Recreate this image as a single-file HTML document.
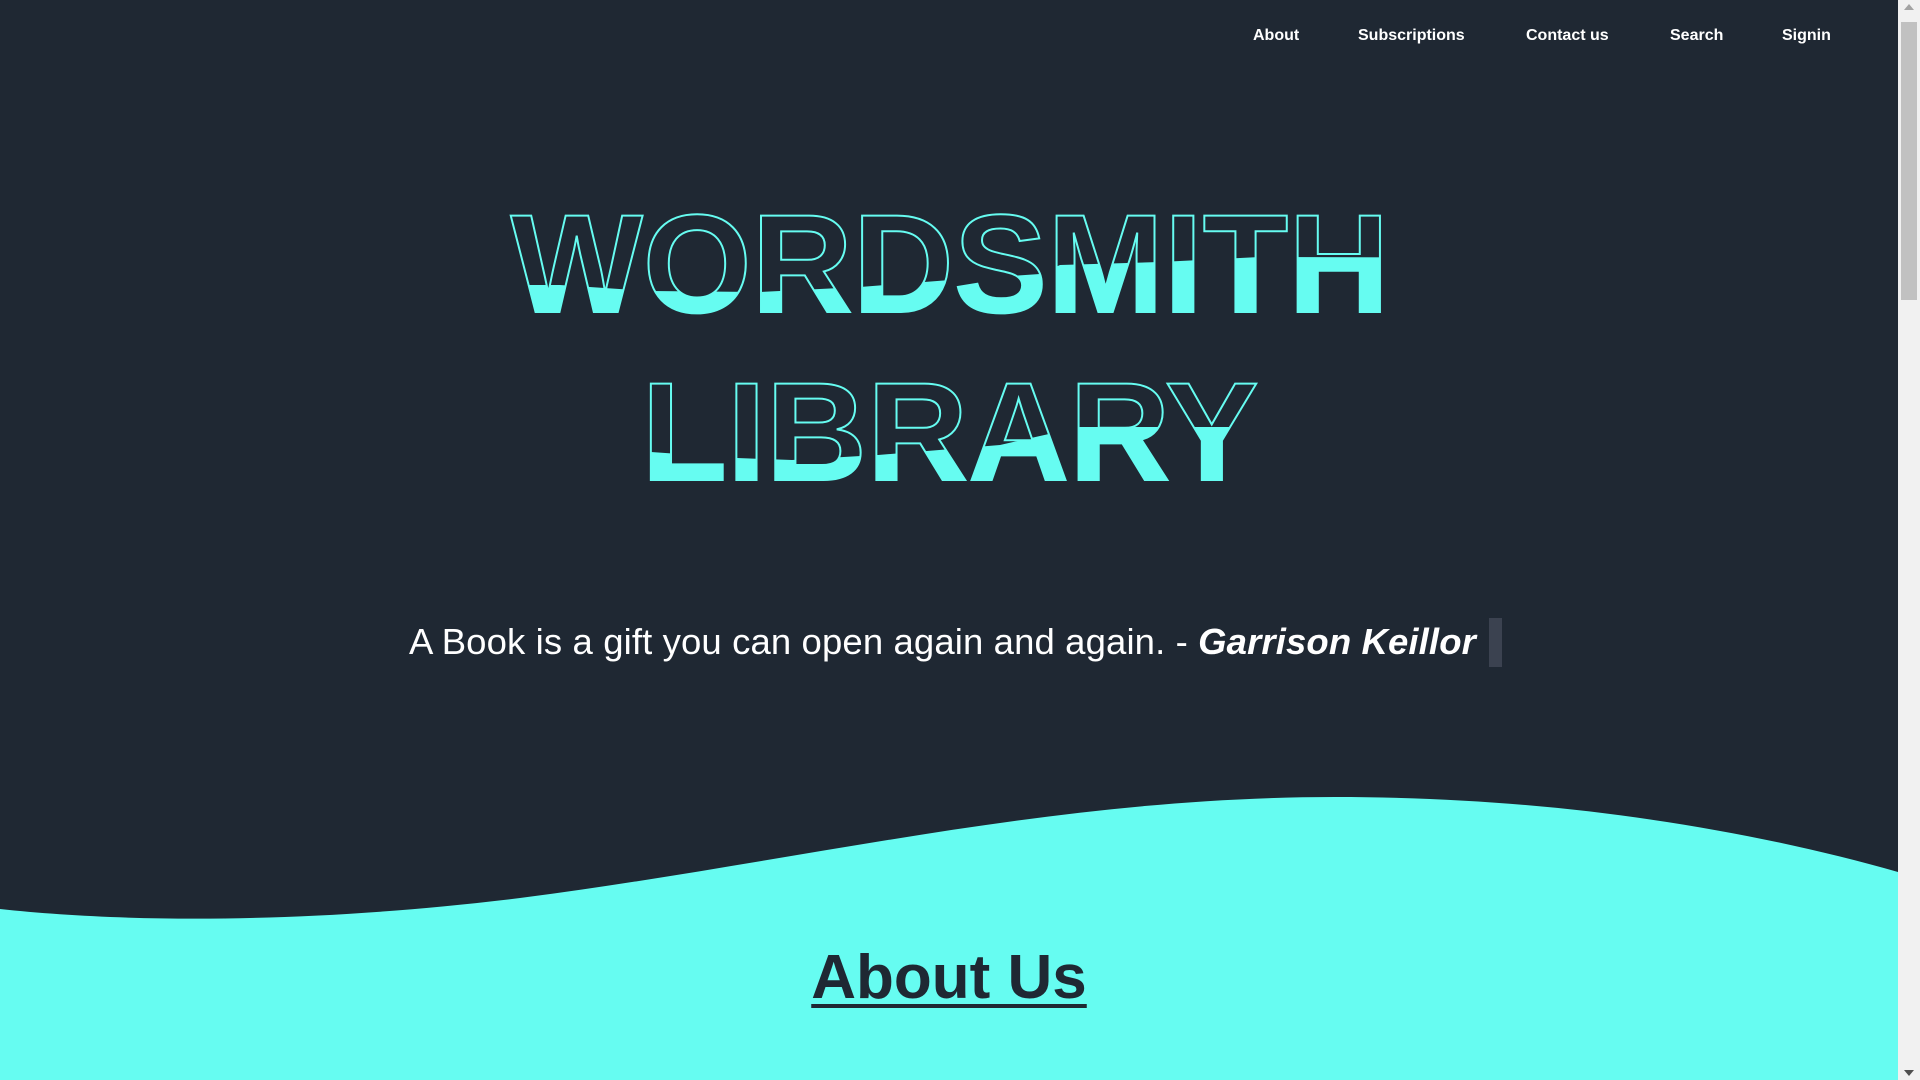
<!DOCTYPE html>
<html><head><meta charset="utf-8"><style>
html,body{margin:0;padding:0;width:1920px;height:1080px;overflow:hidden;background:#1f2833;font-family:"Liberation Sans",Arial,sans-serif}
.nav a{position:absolute;top:26px;color:#fff;font-weight:bold;font-size:16px;text-decoration:none;line-height:20px;white-space:nowrap}
.t{position:absolute;left:0;width:1900px;text-align:center;font-weight:bold;font-size:140px;line-height:168px;height:168px;white-space:nowrap;margin:0}
.o{color:transparent;-webkit-text-stroke:2px #66fcf1}
.f{color:#66fcf1}
.quote{position:absolute;left:409px;top:618px;font-size:36.5px;color:#fff;line-height:48px;white-space:nowrap;letter-spacing:0.12px}
.cur{position:absolute;left:1489px;top:618px;width:13px;height:49px;background:#3b4250}
.about{position:absolute;left:0;width:1898px;text-align:center;top:942px;font-size:62px;font-weight:bold;color:#1f2833;text-decoration:underline;text-decoration-thickness:4px;text-underline-offset:6px}
.sb{position:absolute;right:0;top:0;width:22px;height:1080px;background:#f1f1f1}
.th{position:absolute;left:3px;top:22px;width:16px;height:278px;background:#c1c1c1}
</style></head><body>
<div class="nav">
<a style="left:1253px">About</a>
<a style="left:1358px">Subscriptions</a>
<a style="left:1526px">Contact us</a>
<a style="left:1670px">Search</a>
<a style="left:1782px">Signin</a>
</div>
<div class="t o" style="top:180px">WORDSMITH</div>
<div class="t f" style="top:180px;clip-path:polygon(0 105px,560px 105px,650px 111px,760px 112px,860px 107px,950px 100px,1040px 94px,1060px 85px,1160px 82px,1200px 80px,1260px 77px,1900px 79px,1900px 168px,0 168px)">WORDSMITH</div>
<div class="t o" style="top:348px">LIBRARY</div>
<div class="t f" style="top:348px;clip-path:polygon(0 104px,651px 104px,737px 110px,792px 112px,878px 107px,1000px 97px,1080px 79px,1900px 79px,1900px 168px,0 168px)">LIBRARY</div>
<div class="quote">A Book is a gift you can open again and again. - <b><i>Garrison Keillor</i></b></div>
<div class="cur"></div>
<svg style="position:absolute;left:0;top:0" width="1898" height="1080"><path d="M0,909 C120,922 300,925 520,898 C800,862 1050,797 1335,797 C1560,797 1750,830 1898,872 L1898,1080 L0,1080Z" fill="#66fcf1"/></svg>
<div class="about">About Us</div>
<div class="sb"><div class="th"></div>
<div style="position:absolute;top:4px;left:6px;width:0;height:0;border-left:5px solid transparent;border-right:5px solid transparent;border-bottom:6px solid #a3a3a3"></div>
<div style="position:absolute;bottom:4px;left:6px;width:0;height:0;border-left:5px solid transparent;border-right:5px solid transparent;border-top:6px solid #505050"></div>
</div>
</body></html>
